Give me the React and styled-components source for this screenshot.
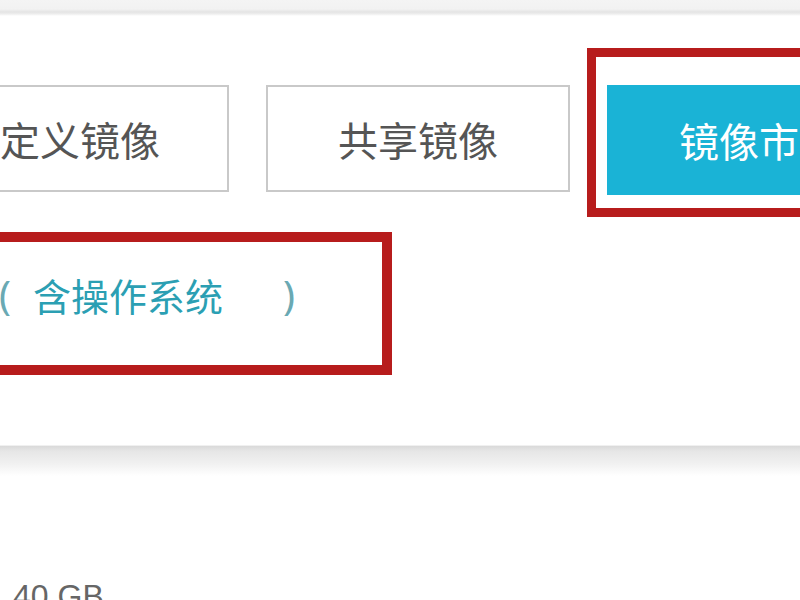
import React from 'react';
import styled, {createGlobalStyle} from 'styled-components';

const GlobalStyle = createGlobalStyle`
    html, body {
        margin: 0;
        padding: 0;
        background: #fff;
        overflow: hidden;
    }
    body {
        font-family: "Noto Sans CJK SC", "Noto Sans", sans-serif;
    }
`;

const Page = styled.div`
    width: 800px;
    height: 600px;
    overflow: hidden;
    display: flex;
    flex-direction: column;
`;

const TopStrip = styled.div`
    height: 16px;
    flex-shrink: 0;
    background: linear-gradient(#f4f4f4 0, #f2f2f2 9px, #e4e4e4 12px, #eeeeee 14px, #ffffff 16px);
`;

const Panel = styled.section`
    position: relative;
    height: 429px;
    flex-shrink: 0;
    background: #fff;
    display: flex;
    flex-direction: column;
`;

const ButtonRow = styled.div`
    display: flex;
    gap: 37px;
    margin-top: 69px;
    margin-left: -109px;
`;

const TypeButton = styled.button`
    flex-shrink: 0;
    width: ${p => p.$width || 304}px;
    height: ${p => p.$active ? 110 : 107}px;
    box-sizing: border-box;
    display: flex;
    align-items: center;
    justify-content: center;
    border: ${p => p.$active ? 'none' : '2px solid #c9c9c9'};
    background: ${p => p.$active ? '#1ab3d6' : '#fff'};
    color: ${p => p.$active ? '#fff' : '#555'};
    font-family: "Noto Sans CJK SC", sans-serif;
    font-size: 40px;
    font-weight: 400;
    padding: 0;
    cursor: pointer;
`;

const NoteRow = styled.div`
    display: flex;
    align-items: center;
    height: 40px;
    margin-top: 80px;
    color: #2b9fb3;
    font-size: 38px;
    font-weight: 400;
    line-height: 40px;
`;

const Paren = styled.span`
    font-family: "Noto Sans", sans-serif;
    font-size: 40px;
    font-weight: 400;
    color: #6aa9b3;
    width: ${p => p.$width}px;
    margin-left: ${p => p.$offset || 0}px;
`;

const Highlight = styled.div`
    position: absolute;
    box-sizing: border-box;
    border: ${p => p.$thick}px solid #b71c1c;
    left: ${p => p.$left}px;
    top: ${p => p.$top}px;
    width: ${p => p.$width}px;
    height: ${p => p.$height}px;
    pointer-events: none;
`;

const PanelShadow = styled.div`
    height: 30px;
    flex-shrink: 0;
    border-top: 1px solid #f0f0f0;
    background: linear-gradient(#d9d9d9 0, #e6e6e6 5px, #f1f1f1 18px, #ffffff 30px);
`;

const Footer = styled.div`
    padding: 104px 0 0 13px;
    font-family: "Liberation Sans", Arial, sans-serif;
    font-size: 32px;
    line-height: 32px;
    color: #666;
`;

const types = [
    {label: '自定义镜像', width: 338},
    {label: '共享镜像'},
    {label: '镜像市场', active: true},
];

export default function App() {
    return (
        <Page>
            <GlobalStyle />
            <TopStrip />
            <Panel>
                <ButtonRow>
                    {types.map(t => (
                        <TypeButton key={t.label} $width={t.width} $active={t.active}>
                            {t.label}
                        </TypeButton>
                    ))}
                </ButtonRow>
                <NoteRow>
                    <Paren $width={34} $offset={-1}>(</Paren>
                    <span>含操作系统</span>
                    <Paren $width={20} $offset={60}>)</Paren>
                </NoteRow>
                <Highlight $thick={9} $left={587} $top={32} $width={300} $height={169} />
                <Highlight $thick={10} $left={-30} $top={216} $width={422} $height={143} />
            </Panel>
            <PanelShadow />
            <Footer>40 GB</Footer>
        </Page>
    );
}
